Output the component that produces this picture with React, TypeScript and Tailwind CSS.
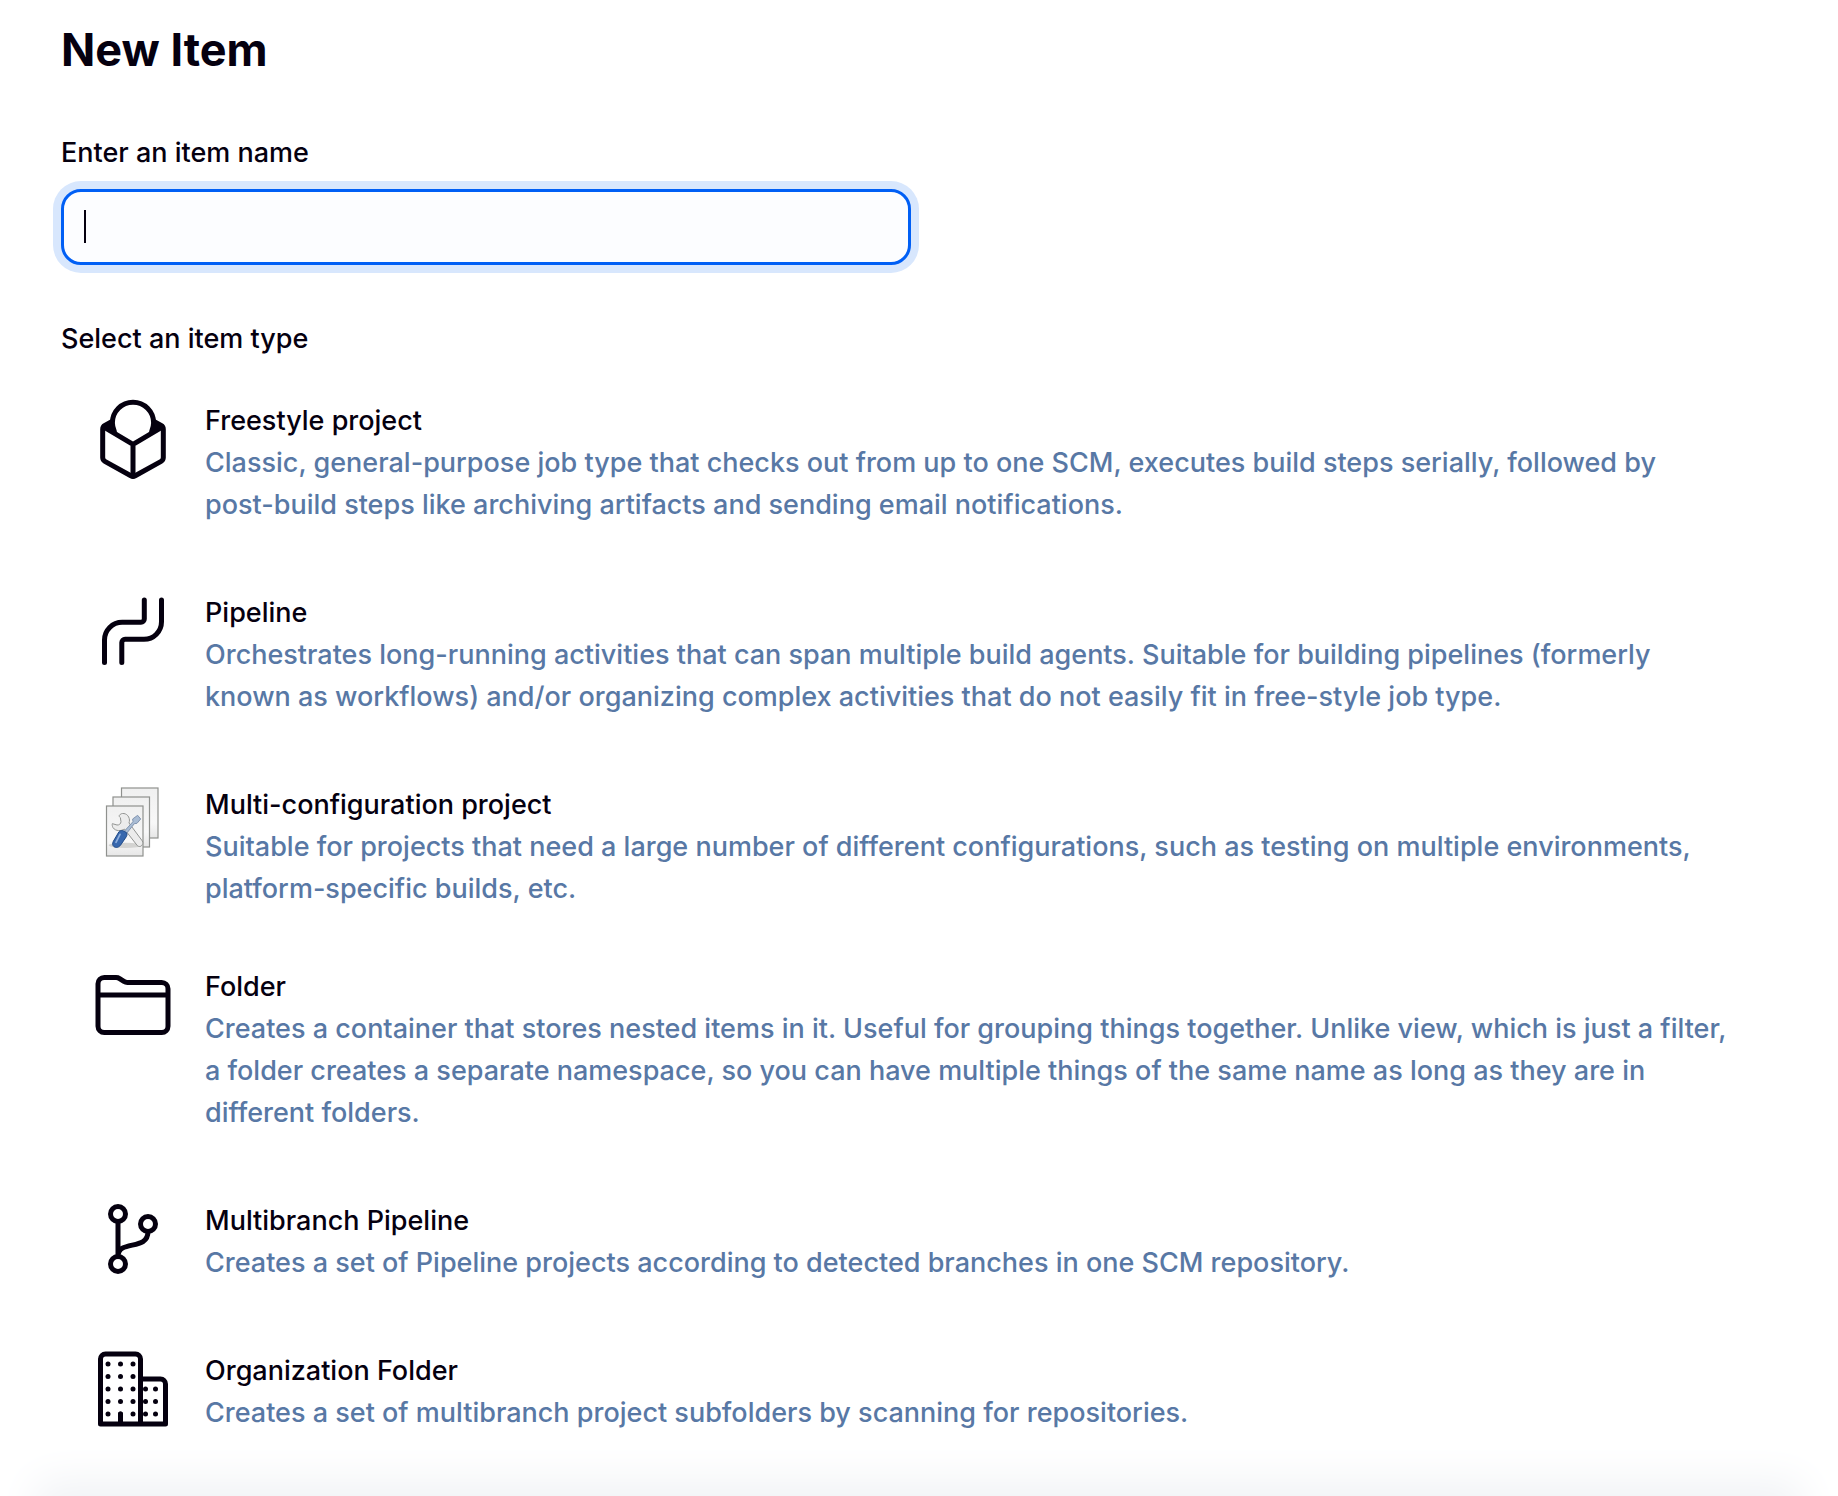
import type { ReactNode } from "react";

function Outline({ box, width, children }: { box: string; width: number; children: ReactNode }) {
  return (
    <svg
      viewBox={box}
      className="size-20 shrink-0"
      fill="none"
      stroke="currentColor"
      strokeWidth={width}
      strokeLinecap="round"
      strokeLinejoin="round"
      aria-hidden="true"
    >
      {children}
    </svg>
  );
}

const FreestyleIcon = () => (
  <Outline box="0 0 512 512" width={32}>
    <path d="M136 206C127 184 124 166 124 152a132 132 0 0 1 264 0c0 14-3 32-12 54" />
    <path d="M122 144 76 169a28 28 0 0 0-14 24v182a28 28 0 0 0 14 24l166 92a28 28 0 0 0 28 0l166-92a28 28 0 0 0 14-24V193a28 28 0 0 0-14-24l-46-25" />
    <path d="M70 180 256 290l186-110M256 290v202" />
    <path d="M74 178l48-28 12 62zM438 178l-48-28-12 62z" fill="currentColor" stroke="none" />
  </Outline>
);

const PipelineIcon = () => (
  <Outline box="0 0 80 80" width={5}>
    <path d="M11.5 71.5V49A17.7 17.7 0 0 1 29.2 31.3H48a3.3 3.3 0 0 0 3.3-3.3V9" />
    <path d="M28.8 71.5V51.6a3.3 3.3 0 0 1 3.3-3.3H51a17.5 17.5 0 0 0 17.5-17.5V9" />
  </Outline>
);

const MultiConfigIcon = () => (
  <svg viewBox="0 0 80 80" className="size-20 shrink-0" aria-hidden="true">
    <defs>
      <linearGradient id="sheet" x1="0" y1="0" x2="0" y2="1">
        <stop offset="0" stopColor="#f0f0f0" />
        <stop offset="0.7" stopColor="#f8f8f8" />
        <stop offset="1" stopColor="#e6e6e6" />
      </linearGradient>
    </defs>
    <g fill="url(#sheet)" stroke="#8f918e" strokeWidth="1.2">
      <rect x="28.5" y="5" width="36.5" height="50" />
      <rect x="20" y="14" width="36.5" height="50" />
      <rect x="13.5" y="23" width="36.5" height="50" />
    </g>
    <g transform="translate(7 0) scale(0.3333)" strokeWidth="3" strokeLinejoin="round">
      <ellipse cx="76" cy="187" rx="50" ry="8" fill="#d3d3d1" />
      <path
        d="M58 97C64 88 80 90 86 102c3 6 3 12 1 18l40 54c5 10-5 22-15 14L73 138c-8 6-26 8-34-4-2-4-3-8-2-12l14 4c6 1 12-4 12-10l-2-12c-2-2-4-3-3-7z"
        fill="#ececec"
        stroke="#929492"
      />
      <path d="M70 148l29-32-1-8 15-11 9 11-11 13-8 1-27 34z" fill="#a9bcd4" stroke="#8295b0" />
      <path
        d="M57 146c6-6 14-3 20 1 5 4 5 9 2 14L62 186c-6 8-14 9-20 5-5-4-5-9-2-16z"
        fill="#3868ae"
        stroke="#204a87"
      />
      <path d="M60 154 48 178" stroke="#8fb0de" strokeWidth="5" strokeLinecap="round" />
    </g>
  </svg>
);

const FolderIcon = () => (
  <Outline box="0 0 512 512" width={32}>
    <path d="M440 432H72a40 40 0 0 1-40-40V120a40 40 0 0 1 40-40h75.89a40 40 0 0 1 22.19 6.72l27.84 18.56a40 40 0 0 0 22.19 6.72H440a40 40 0 0 1 40 40v240a40 40 0 0 1-40 40zM32 192h448" />
  </Outline>
);

const BranchIcon = () => (
  <Outline box="0 0 512 512" width={32}>
    <circle cx="160" cy="96" r="48" />
    <circle cx="160" cy="416" r="48" />
    <circle cx="352" cy="160" r="48" />
    <path d="M160 368V144M352 208c0 128-192 48-192 160" />
  </Outline>
);

const tallDots = [96, 176, 256].flatMap((x) => [96, 176, 256, 336, 416].map((y) => [x, y]));
const shortDots = [336, 400].flatMap((x) => [256, 336, 416].map((y) => [x, y]));

const BuildingIcon = () => (
  <Outline box="0 0 512 512" width={32}>
    <path d="M176 416v64M80 32h192a32 32 0 0 1 32 32v416H48V64a32 32 0 0 1 32-32zM304 192h128a32 32 0 0 1 32 32v256H304z" />
    <g fill="currentColor" stroke="none">
      {[...tallDots, ...shortDots].map(([x, y]) => (
        <circle key={`${x}-${y}`} cx={x} cy={y} r="16" />
      ))}
    </g>
  </Outline>
);

const groups = [
  [
    {
      title: "Freestyle project",
      text: (
        <>
          Classic, general-purpose job type that checks out from up to one SCM, executes build steps serially, followed
          by <span className="whitespace-nowrap">post-build</span> steps like archiving artifacts and sending email
          notifications.
        </>
      ),
      Icon: FreestyleIcon,
    },
    {
      title: "Pipeline",
      text: "Orchestrates long-running activities that can span multiple build agents. Suitable for building pipelines (formerly known as workflows) and/or organizing complex activities that do not easily fit in free-style job type.",
      Icon: PipelineIcon,
    },
    {
      title: "Multi-configuration project",
      text: "Suitable for projects that need a large number of different configurations, such as testing on multiple environments, platform-specific builds, etc.",
      Icon: MultiConfigIcon,
    },
  ],
  [
    {
      title: "Folder",
      text: "Creates a container that stores nested items in it. Useful for grouping things together. Unlike view, which is just a filter, a folder creates a separate namespace, so you can have multiple things of the same name as long as they are in different folders.",
      Icon: FolderIcon,
    },
    {
      title: "Multibranch Pipeline",
      text: "Creates a set of Pipeline projects according to detected branches in one SCM repository.",
      Icon: BranchIcon,
    },
    {
      title: "Organization Folder",
      text: "Creates a set of multibranch project subfolders by scanning for repositories.",
      Icon: BuildingIcon,
    },
  ],
];

export default function App() {
  return (
    <main className="overflow-hidden bg-white font-['Inter',sans-serif] text-[27px] leading-[42px] text-[#05000f]">
      <div className="px-[61px] pt-5">
        <h1 className="text-[45px] leading-[60px] font-bold">New Item</h1>
        <label htmlFor="item-name" className="mt-[52px] block font-medium">
          Enter an item name
        </label>
        <div className="relative mt-[15px] w-full max-w-[850px]">
          <input
            id="item-name"
            type="text"
            className="block h-[76px] w-full rounded-[20px] border-3 border-[#005ff5] bg-[#fcfdff] px-5 caret-transparent shadow-[0_0_0_8px_#d8e7fd] outline-none"
          />
          <span className="absolute top-[21px] left-[23px] h-[33px] w-[2px] bg-[#05000f]" aria-hidden="true" />
        </div>
        <h2 id="type-label" className="mt-[53px] font-medium">
          Select an item type
        </h2>
        <div aria-labelledby="type-label" role="group" className="mt-[39px] flex flex-col gap-[55px] pr-10 pl-8">
          {groups.map((items, i) => (
            <ul key={i} className="flex flex-col gap-[65px]">
              {items.map(({ title, text, Icon }) => (
                <li key={title}>
                  <button type="button" className="flex w-full items-start gap-8 text-left">
                    <Icon />
                    <span className="min-w-0 flex-1 pt-px">
                      <span className="block font-medium">{title}</span>
                      <span className="block font-[450] text-[#5878a5]">{text}</span>
                    </span>
                  </button>
                </li>
              ))}
            </ul>
          ))}
        </div>
      </div>
      <div className="h-[62px] overflow-hidden px-[50px]">
        <div className="mt-[62px] h-24 shadow-[0_0_44px_14px_#f0f2f5]" />
      </div>
    </main>
  );
}
